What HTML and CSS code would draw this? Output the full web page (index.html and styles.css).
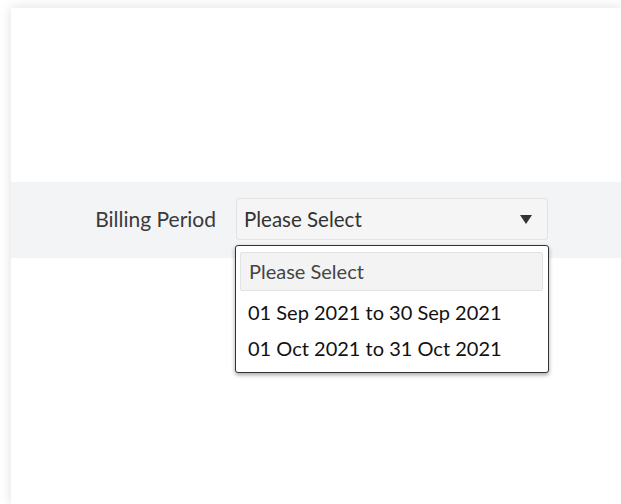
FILE: index.html
```html
<!DOCTYPE html>
<html lang="en">
<head>
<meta charset="utf-8">
<title>Billing</title>
<link rel="stylesheet" href="styles.css">
</head>
<body>
  <main class="card">
    <div class="card-top"></div>
    <section class="field-row">
      <label class="field-label">Billing Period</label>
      <div class="select-wrap">
        <div class="select-box">
          <span class="select-value">Please Select</span>
          <svg class="select-arrow" width="12" height="9" viewBox="0 0 12 9"><path d="M0 0H12L6 9Z" fill="#333"/></svg>
        </div>
        <ul class="select-menu">
          <li class="menu-item is-active">Please Select</li>
          <li class="menu-item">01 Sep 2021 to 30 Sep 2021</li>
          <li class="menu-item">01 Oct 2021 to 31 Oct 2021</li>
        </ul>
      </div>
    </section>
  </main>
</body>
</html>
```

FILE: styles.css
```css
html, body {
  margin: 0;
  padding: 0;
  background: #ffffff;
  overflow: hidden;
}

body {
  font-family: Lato, "Open Sans", sans-serif;
  color: #333;
}

.card {
  margin: 8px 0 0 11px;
  width: calc(100vw - 11px);
  height: calc(100vh - 8px);
  box-sizing: border-box;
  background: #fff;
  box-shadow: 0 0 12px rgba(0, 0, 0, 0.13);
}

.card-top {
  height: 174px;
}

.field-row {
  display: flex;
  align-items: flex-start;
  gap: 20px;
  height: 76px;
  padding-top: 16px;
  box-sizing: border-box;
  background: #f3f4f6;
}

.field-label {
  width: 205px;
  text-align: right;
  font-size: 21px;
  line-height: 42px;
  color: #3a3a3a;
}

.select-wrap {
  position: relative;
  width: 312px;
}

.select-box {
  height: 42px;
  box-sizing: border-box;
  display: flex;
  align-items: center;
  justify-content: space-between;
  padding: 0 15px 0 7px;
  background: #f5f5f5;
  border: 1px solid #e3e3e3;
  border-radius: 3px;
  font-size: 20.5px;
  color: #333;
}

.select-arrow {
  display: block;
}

.select-menu {
  position: absolute;
  top: 47px;
  left: -1px;
  width: 314px;
  height: 128px;
  box-sizing: border-box;
  margin: 0;
  padding: 6px 5px 0 4px;
  list-style: none;
  background: #fff;
  border: 1px solid #333;
  border-radius: 3px;
  box-shadow: 0 2px 4px rgba(0, 0, 0, 0.35);
}

.menu-item {
  height: 36px;
  line-height: 36px;
  padding-left: 8px;
  font-size: 20px;
  color: #111;
}

.menu-item.is-active {
  height: 39px;
  line-height: 37px;
  box-sizing: border-box;
  padding-left: 8px;
  margin-bottom: 3px;
  background: #f3f3f3;
  border: 1px solid #e2e2e2;
  border-radius: 2px;
  color: #444;
}
```
